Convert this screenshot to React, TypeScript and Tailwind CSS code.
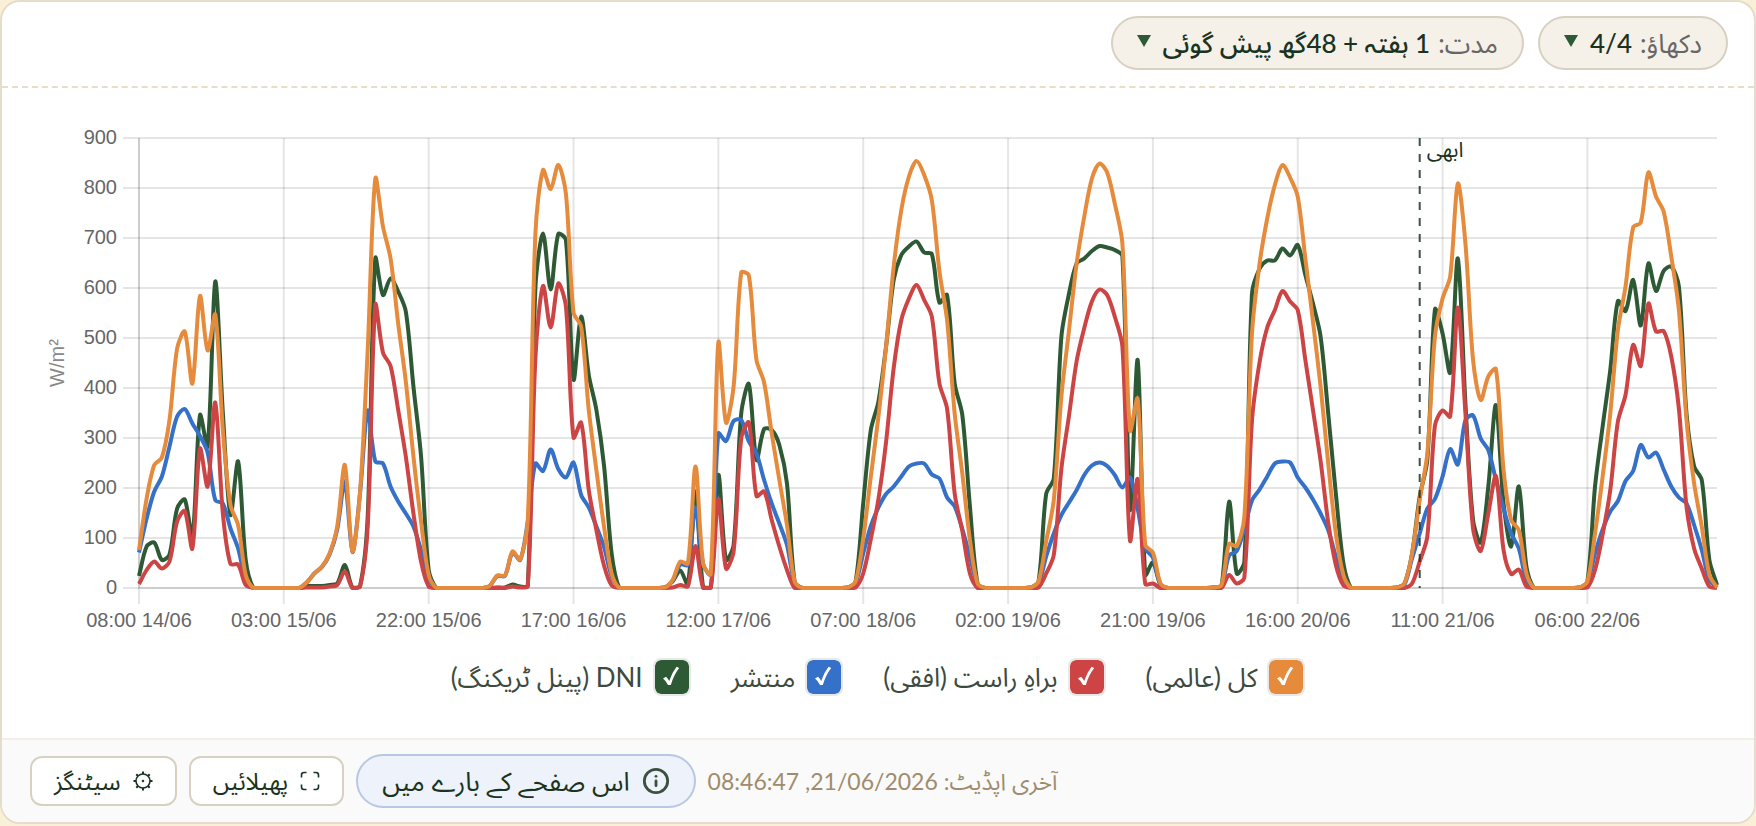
import { useState } from "react";
import { Info } from "lucide-react";

type SeriesKey = "dni" | "diffuse" | "direct" | "global";

type Day = { start: number } & Record<SeriesKey, number[]>;

const HOURS = 208;

// hourly W/m² values, one block for every daylight period
const DAYS: Day[] = [
  {
    start: 0,
    global: [76, 179, 246, 261, 336, 479, 513, 409, 584, 475, 547, 316, 166, 126, 26],
    diffuse: [71, 139, 193, 223, 283, 343, 358, 329, 304, 271, 176, 169, 119, 79, 17],
    direct: [8, 36, 53, 39, 53, 133, 154, 79, 279, 203, 371, 149, 48, 47, 6],
    dni: [24, 83, 91, 56, 67, 159, 177, 100, 346, 283, 613, 350, 146, 253, 56],
  },
  {
    start: 22,
    global: [11, 29, 43, 69, 123, 246, 73, 193, 476, 819, 723, 659, 529, 413, 263, 133, 26],
    diffuse: [11, 29, 42, 67, 117, 213, 72, 190, 355, 253, 249, 203, 173, 149, 123, 76, 19],
    direct: [1, 1, 1, 3, 6, 33, 0, 3, 123, 566, 471, 444, 356, 263, 149, 53, 3],
    dni: [4, 4, 4, 6, 9, 46, 1, 4, 143, 659, 586, 619, 593, 553, 403, 263, 36],
  },
  {
    start: 46,
    global: [4, 25, 25, 73, 57, 136, 709, 836, 798, 846, 789, 551, 523, 356, 236, 123, 29],
    diffuse: [4, 24, 24, 71, 56, 133, 249, 234, 277, 238, 221, 251, 186, 161, 123, 82, 23],
    direct: [0, 0, 0, 3, 1, 4, 460, 604, 521, 609, 563, 301, 331, 196, 116, 45, 5],
    dni: [0, 1, 1, 7, 3, 4, 600, 709, 597, 708, 696, 417, 543, 426, 356, 245, 69],
  },
  {
    start: 69,
    global: [1, 16, 53, 49, 243, 49, 28, 491, 331, 403, 631, 625, 456, 411, 309, 216, 126, 13],
    diffuse: [1, 15, 47, 46, 161, 48, 27, 309, 294, 334, 336, 293, 269, 216, 169, 129, 86, 11],
    direct: [0, 1, 6, 3, 84, 0, 0, 178, 39, 73, 299, 331, 184, 193, 136, 83, 36, 0],
    dni: [1, 13, 35, 7, 193, 2, 1, 226, 56, 86, 349, 408, 256, 318, 316, 286, 209, 13],
  },
  {
    start: 93,
    global: [1, 13, 99, 223, 343, 483, 643, 756, 823, 854, 826, 776, 633, 536, 349, 229, 96, 9],
    diffuse: [1, 11, 69, 124, 161, 188, 203, 223, 243, 249, 249, 227, 219, 181, 163, 118, 63, 7],
    direct: [0, 1, 29, 98, 178, 292, 440, 536, 579, 606, 576, 543, 409, 359, 189, 114, 29, 0],
    dni: [1, 13, 169, 316, 373, 483, 616, 666, 683, 693, 671, 668, 571, 586, 409, 346, 163, 9],
  },
  {
    start: 117,
    global: [1, 13, 93, 176, 383, 516, 649, 743, 819, 849, 831, 769, 689, 315, 379, 86, 71, 9],
    diffuse: [1, 9, 63, 109, 146, 171, 196, 226, 245, 251, 244, 226, 201, 221, 159, 79, 61, 7],
    direct: [0, 1, 29, 66, 239, 345, 454, 520, 573, 597, 586, 543, 483, 95, 218, 8, 9, 0],
    dni: [1, 13, 188, 219, 503, 589, 649, 659, 674, 684, 681, 676, 664, 157, 456, 26, 51, 6],
  },
  {
    start: 141,
    global: [1, 6, 88, 84, 143, 509, 649, 739, 806, 846, 821, 783, 659, 533, 403, 249, 109, 26],
    diffuse: [1, 4, 65, 74, 119, 175, 197, 223, 249, 253, 251, 221, 201, 177, 149, 116, 63, 19],
    direct: [0, 0, 26, 9, 21, 335, 452, 521, 556, 594, 573, 556, 456, 356, 254, 131, 46, 5],
    dni: [1, 4, 173, 29, 53, 589, 639, 655, 655, 679, 665, 686, 626, 569, 503, 349, 189, 49],
  },
  {
    start: 165,
    global: [1, 9, 69, 176, 269, 503, 579, 623, 809, 689, 456, 376, 423, 438, 236, 136, 116, 29],
    diffuse: [1, 7, 59, 109, 159, 178, 223, 278, 247, 336, 345, 299, 276, 216, 159, 109, 79, 16],
    direct: [0, 0, 9, 53, 103, 325, 355, 343, 561, 349, 119, 74, 149, 224, 76, 28, 37, 3],
    dni: [1, 9, 69, 183, 256, 557, 509, 431, 659, 369, 136, 91, 203, 366, 169, 83, 203, 43],
  },
  {
    start: 189,
    global: [1, 13, 109, 223, 349, 516, 603, 721, 731, 831, 783, 753, 663, 556, 336, 209, 123, 26, 1],
    diffuse: [1, 11, 69, 117, 153, 174, 214, 234, 286, 261, 271, 237, 203, 181, 169, 126, 76, 16, 1],
    direct: [0, 1, 36, 107, 196, 333, 386, 486, 444, 569, 513, 514, 463, 359, 163, 79, 39, 3, 0],
    dni: [1, 13, 203, 323, 436, 574, 554, 616, 525, 649, 594, 634, 643, 603, 349, 243, 216, 56, 6],
  },
];

// drawn bottom to top
const SERIES: { key: SeriesKey; label: string; color: string; box: string }[] = [
  { key: "dni", label: "DNI (پینل ٹریکنگ)", color: "#2d5a35", box: "bg-[#2d5a35]" },
  { key: "diffuse", label: "منتشر", color: "#3571c8", box: "bg-[#3571c8]" },
  { key: "direct", label: "براہِ راست (افقی)", color: "#cc4444", box: "bg-[#cc4444]" },
  { key: "global", label: "کل (عالمی)", color: "#e68a3c", box: "bg-[#e68a3c]" },
];

const TICKS = [
  "08:00 14/06",
  "03:00 15/06",
  "22:00 15/06",
  "17:00 16/06",
  "12:00 17/06",
  "07:00 18/06",
  "02:00 19/06",
  "21:00 19/06",
  "16:00 20/06",
  "11:00 21/06",
  "06:00 22/06",
];

const LEFT = 137;
const RIGHT = 1715;
const TOP = 50;
const BOTTOM = 500;
const NOW = 168;
const TENSION = 0.3;

const xAt = (i: number) => LEFT + (i * (RIGHT - LEFT)) / (HOURS - 1);
const yAt = (v: number) => BOTTOM - (v * (BOTTOM - TOP)) / 900;
const clampY = (y: number) => Math.min(BOTTOM, Math.max(TOP, y));

function valuesOf(key: SeriesKey) {
  const out = new Array<number>(HOURS).fill(0);
  DAYS.forEach((d) => d[key].forEach((v, i) => (out[d.start + i] = v)));
  return out;
}

// spline through the readings, control points kept inside the plot
function curve(values: number[]) {
  const pts = values.map((v, i) => ({ x: xAt(i), y: yAt(v) }));
  const handles = pts.map((p, i) => {
    const prev = pts[Math.max(i - 1, 0)];
    const next = pts[Math.min(i + 1, pts.length - 1)];
    const before = Math.hypot(p.x - prev.x, p.y - prev.y);
    const after = Math.hypot(next.x - p.x, next.y - p.y);
    const fa = (TENSION * before) / (before + after);
    const fb = (TENSION * after) / (before + after);
    const dx = next.x - prev.x;
    const dy = next.y - prev.y;
    return {
      inX: p.x - fa * dx,
      inY: clampY(p.y - fa * dy),
      outX: p.x + fb * dx,
      outY: clampY(p.y + fb * dy),
    };
  });
  let path = `M${pts[0].x} ${pts[0].y}`;
  for (let i = 1; i < pts.length; i++) {
    const a = handles[i - 1];
    const b = handles[i];
    path += `C${a.outX} ${a.outY} ${b.inX} ${b.inY} ${pts[i].x} ${pts[i].y}`;
  }
  return path;
}

function Chart({ visible }: { visible: Record<SeriesKey, boolean> }) {
  return (
    <svg viewBox="0 0 1752 552" className="block w-full h-auto font-[family-name:'Liberation_Sans',Arial,sans-serif]" direction="ltr">
      <defs>
        <clipPath id="plot">
          <rect x={LEFT - 2} y={TOP - 2} width={RIGHT - LEFT + 4} height={BOTTOM - TOP + 4} />
        </clipPath>
      </defs>
      {Array.from({ length: 10 }, (_, i) => i * 100).map((v) => (
        <g key={v}>
          <line x1={LEFT - 16} x2={RIGHT} y1={yAt(v)} y2={yAt(v)} stroke="#000" strokeOpacity={0.1} strokeWidth={2} />
          <text x={115} y={yAt(v) + 6} textAnchor="end" fontSize={20} fill="#666">
            {v}
          </text>
        </g>
      ))}
      {TICKS.map((t, i) => (
        <g key={t}>
          <line x1={xAt(i * 19)} x2={xAt(i * 19)} y1={TOP} y2={BOTTOM + 16} stroke="#000" strokeOpacity={0.1} strokeWidth={2} />
          <text x={xAt(i * 19)} y={539} textAnchor="middle" fontSize={20} fill="#666">
            {t}
          </text>
        </g>
      ))}
      <path d={`M${LEFT} ${TOP}V${BOTTOM}H${RIGHT}`} fill="none" stroke="#000" strokeOpacity={0.1} strokeWidth={2} />
      <text transform="translate(62 275) rotate(-90)" textAnchor="middle" fontSize={20} fill="#888">
        W/m²
      </text>
      <g clipPath="url(#plot)">
        {SERIES.filter((s) => visible[s.key]).map((s) => (
          <path key={s.key} d={curve(valuesOf(s.key))} fill="none" stroke={s.color} strokeWidth={4} strokeLinejoin="round" />
        ))}
      </g>
      <line x1={xAt(NOW)} x2={xAt(NOW)} y1={TOP} y2={BOTTOM} stroke="#1a3320" strokeOpacity={0.85} strokeWidth={2} strokeDasharray="8 8" />
      <text x={xAt(NOW) + 7} y={69} fontSize={21} fill="#1a3320" className="font-[family-name:'Noto_Sans_Arabic','Noto_Sans',sans-serif]">
        ابھی
      </text>
    </svg>
  );
}

function FilterButton({ label, value }: { label: string; value: string }) {
  return (
    <button className="flex h-[54px] items-center gap-2 rounded-full border-2 border-[#d8d0c0] bg-[#f5f0e8] px-6 text-[26px] text-[#1a3320]">
      <span className="text-[#666]">{label}</span>
      <span className="font-medium">{value}</span>
      <svg viewBox="0 0 14 12" className="ms-1 mb-1 h-3 w-3.5 fill-[#2d5a35]">
        <path d="M0 0H14L7 12Z" />
      </svg>
    </button>
  );
}

export default function App() {
  const [visible, setVisible] = useState<Record<SeriesKey, boolean>>({
    dni: true,
    diffuse: true,
    direct: true,
    global: true,
  });
  const shown = Object.values(visible).filter(Boolean).length;

  return (
    <div className="min-h-screen bg-[#faf0d7] font-[family-name:Lato,'Noto_Sans_Arabic','Noto_Sans',sans-serif]">
      <main dir="rtl" className="overflow-hidden rounded-[20px] border-2 border-[#e5dccb] bg-white">
        <header className="flex flex-wrap gap-3.5 border-b-2 border-dashed border-[#e5dfc8] px-[26px] pt-3.5 pb-4">
          <FilterButton label="دکھاؤ:" value={`${shown}/4`} />
          <FilterButton label="مدت:" value="1 ہفتہ + 48گھ پیش گوئی" />
        </header>

        <Chart visible={visible} />

        <div className="flex flex-wrap justify-center gap-10 px-6 pt-[18px] pb-[42px]">
          {[...SERIES].reverse().map((s) => (
            <label key={s.key} className="flex h-[38px] items-center gap-2.5 text-[26px] text-[#3c4a40]">
              <span className="relative size-[38px]">
                <input
                  type="checkbox"
                  checked={visible[s.key]}
                  onChange={() => setVisible({ ...visible, [s.key]: !visible[s.key] })}
                  className={`block size-[38px] appearance-none rounded-lg border-2 border-[#e8e8e8] bg-clip-padding ${s.box}`}
                />
                {visible[s.key] && (
                  <svg viewBox="0 0 38 38" className="pointer-events-none absolute inset-0 fill-white">
                    <path d="M10 20.5L13 18.8Q15 20.5 16.2 23Q19 14.5 23.6 8.8L26.2 10Q20.5 17.5 17.8 27H15Q13.2 23 10 20.5Z" />
                  </svg>
                )}
              </span>
              {s.label}
            </label>
          ))}
        </div>

        <footer className="flex flex-wrap items-center justify-end gap-3 border-t-2 border-[#f5f0e4] bg-[#fafafa] px-7 py-3.5 text-[#1a3320]">
          <span className="text-[23px] text-[#a08c6c]">آخری اپڈیٹ: 21/06/2026, 08:46:47</span>
          <button className="flex h-[54px] items-center gap-3 rounded-full border-2 border-[#b8c8e2] bg-[#edf2fb] px-6 text-[26px]">
            <Info className="size-7 text-[#3c5040]" strokeWidth={2.4} />
            اس صفحے کے بارے میں
          </button>
          <button className="flex h-[50px] items-center gap-3 rounded-xl border-2 border-[#d8d0c0] bg-white px-[22px] text-2xl">
            <svg viewBox="0 0 20 20" className="size-5 fill-none stroke-current" strokeWidth={1.6}>
              <path d="M1.5 6.5V4Q1.5 1.5 4 1.5H6.5M13.5 1.5H16Q18.5 1.5 18.5 4V6.5M18.5 13.5V16Q18.5 18.5 16 18.5H13.5M6.5 18.5H4Q1.5 18.5 1.5 16V13.5" />
            </svg>
            پھیلائیں
          </button>
          <button className="flex h-[50px] items-center gap-3 rounded-xl border-2 border-[#d8d0c0] bg-white px-[22px] text-2xl">
            <svg viewBox="0 0 20 20" className="size-5 fill-none stroke-current" strokeWidth={1.6}>
              <circle cx="10" cy="10" r="7" />
              <circle cx="10" cy="10" r="0.5" />
              <path d="M10 0.5V3M10 17V19.5M0.5 10H3M17 10H19.5M3.3 3.3L5 5M15 15L16.7 16.7M16.7 3.3L15 5M3.3 16.7L5 15" strokeWidth={2} />
            </svg>
            سیٹنگز
          </button>
        </footer>
      </main>
    </div>
  );
}
